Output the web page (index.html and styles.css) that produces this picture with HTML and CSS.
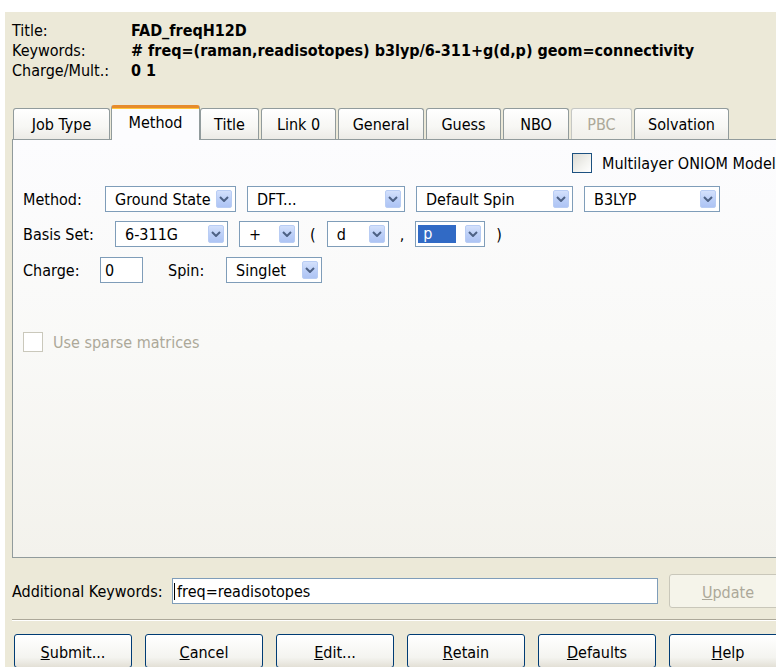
FILE: index.html
```html
<!DOCTYPE html>
<html lang="en">
<head>
<meta charset="utf-8">
<title>Gaussian Calculation Setup</title>
<link rel="stylesheet" href="styles.css">
</head>
<body>
<div class="dialog">
  <div class="summary">
    <span class="s-label">Title:</span><span class="s-value">FAD_freqH12D</span>
    <span class="s-label">Keywords:</span><span class="s-value"># freq=(raman,readisotopes) b3lyp/6-311+g(d,p) geom=connectivity</span>
    <span class="s-label">Charge/Mult.:</span><span class="s-value">0 1</span>
  </div>

  <div class="tabs">
    <div class="tab tab-job">Job Type</div>
    <div class="tab tab-method is-active">Method</div>
    <div class="tab tab-title">Title</div>
    <div class="tab tab-link">Link 0</div>
    <div class="tab tab-general">General</div>
    <div class="tab tab-guess">Guess</div>
    <div class="tab tab-nbo">NBO</div>
    <div class="tab tab-pbc is-disabled">PBC</div>
    <div class="tab tab-solv">Solvation</div>
  </div>

  <div class="panel">
    <div class="row row-oniom">
      <span class="check"></span>
      <span>Multilayer ONIOM Model</span>
    </div>

    <div class="row row-method">
      <span class="lbl lbl-method">Method:</span>
      <div class="combo w-ground"><span class="combo-text">Ground State</span><span class="drop"><svg viewBox="0 0 10 6" width="10" height="6"><polyline points="1,1 5,5 9,1" /></svg></span></div>
      <div class="combo w-dft"><span class="combo-text">DFT...</span><span class="drop"><svg viewBox="0 0 10 6" width="10" height="6"><polyline points="1,1 5,5 9,1" /></svg></span></div>
      <div class="combo w-spin"><span class="combo-text">Default Spin</span><span class="drop"><svg viewBox="0 0 10 6" width="10" height="6"><polyline points="1,1 5,5 9,1" /></svg></span></div>
      <div class="combo w-func"><span class="combo-text">B3LYP</span><span class="drop"><svg viewBox="0 0 10 6" width="10" height="6"><polyline points="1,1 5,5 9,1" /></svg></span></div>
    </div>

    <div class="row row-basis">
      <span class="lbl lbl-basis">Basis Set:</span>
      <div class="combo w-basis"><span class="combo-text">6-311G</span><span class="drop"><svg viewBox="0 0 10 6" width="10" height="6"><polyline points="1,1 5,5 9,1" /></svg></span></div>
      <div class="combo w-diffuse"><span class="combo-text">+</span><span class="drop"><svg viewBox="0 0 10 6" width="10" height="6"><polyline points="1,1 5,5 9,1" /></svg></span></div>
      <span class="punct">(</span>
      <div class="combo w-pol"><span class="combo-text">d</span><span class="drop"><svg viewBox="0 0 10 6" width="10" height="6"><polyline points="1,1 5,5 9,1" /></svg></span></div>
      <span class="punct">,</span>
      <div class="combo w-pol2"><span class="combo-sel">p</span><span class="drop"><svg viewBox="0 0 10 6" width="10" height="6"><polyline points="1,1 5,5 9,1" /></svg></span></div>
      <span class="punct">)</span>
    </div>

    <div class="row row-charge">
      <span class="lbl lbl-charge">Charge:</span>
      <div class="textbox w-charge">0</div>
      <span class="lbl lbl-spin">Spin:</span>
      <div class="combo w-mult"><span class="combo-text">Singlet</span><span class="drop"><svg viewBox="0 0 10 6" width="10" height="6"><polyline points="1,1 5,5 9,1" /></svg></span></div>
    </div>

    <div class="row row-sparse is-disabled">
      <span class="check check-disabled"></span>
      <span>Use sparse matrices</span>
    </div>
  </div>

  <div class="keywords-row">
    <span class="lbl lbl-keywords">Additional Keywords:</span>
    <div class="textbox w-keywords"><span class="caret"></span>freq=readisotopes</div>
    <div class="btn btn-disabled"><u>U</u>pdate</div>
  </div>

  <div class="separator"></div>

  <div class="buttons">
    <div class="btn"><u>S</u>ubmit...</div>
    <div class="btn"><u>C</u>ancel</div>
    <div class="btn"><u>E</u>dit...</div>
    <div class="btn"><u>R</u>etain</div>
    <div class="btn"><u>D</u>efaults</div>
    <div class="btn"><u>H</u>elp</div>
  </div>
</div>
</body>
</html>
```

FILE: styles.css
```css
html, body {
  margin: 0;
  padding: 0;
  background: #ffffff;
  overflow: hidden;
}

body {
  font-family: "DejaVu Sans Condensed", "DejaVu Sans", sans-serif;
  font-stretch: condensed;
  font-size: 16px;
  color: #000000;
}

.dialog {
  margin: 12px 0 0 5px;
  padding: 8px 0 0 7px;
  width: 800px;
  height: 700px;
  background: #ece9d8;
  box-sizing: border-box;
}

/* route summary at the top */
.summary {
  display: grid;
  grid-template-columns: 119px auto;
  grid-auto-rows: 20px;
  align-items: center;
}

.s-value {
  font-weight: bold;
}

/* tab strip */
.tabs {
  display: flex;
  align-items: flex-end;
  gap: 2px;
  height: 34px;
  margin: 25px 0 0 1px;
  position: relative;
  z-index: 1;
}

.tab {
  box-sizing: border-box;
  height: 31px;
  border: 1px solid #919b9c;
  border-bottom: none;
  border-radius: 3px 3px 0 0;
  background: linear-gradient(#ffffff, #f7f7f4 60%, #ecebe6);
  display: flex;
  align-items: center;
  justify-content: center;
  padding-top: 1px;
}

.tab.is-active {
  height: 35px;
  margin: 0 -2px -1px -1px;
  background: #fcfcfe;
  border-top: 3px solid #e68b2c;
  box-shadow: inset 0 1px 0 #ffc73c;
  padding-top: 0;
  padding-bottom: 4px;
}

.tab.is-disabled {
  color: #aca899;
  background: linear-gradient(#fbfbf9, #f1f0ea);
  border-color: #c5c7c4;
}

.tab-job { width: 97px; }
.tab-method { width: 89px; }
.tab-title { width: 59px; }
.tab-link { width: 75px; }
.tab-general { width: 86px; }
.tab-guess { width: 75px; }
.tab-nbo { width: 66px; }
.tab-pbc { width: 61px; }
.tab-solv { width: 95px; }

/* tab page */
.panel {
  box-sizing: border-box;
  width: 786px;
  height: 419px;
  border: 1px solid #919b9c;
  background: linear-gradient(#fcfcfe, #f9f9f7 50%, #f3f2ec);
  padding: 13px 0 0 10px;
}

.row {
  display: flex;
  align-items: center;
}

.row-oniom {
  height: 20px;
  padding-left: 549px;
  gap: 10px;
}

.row-method {
  height: 26px;
  margin-top: 13px;
  gap: 11px;
}

.row-basis {
  height: 26px;
  margin-top: 9px;
  gap: 11px;
}

.row-charge {
  height: 26px;
  margin-top: 10px;
}

.row-sparse {
  height: 20px;
  margin-top: 49px;
  gap: 10px;
}

.is-disabled {
  color: #aca899;
}

.lbl {
  flex: none;
  white-space: nowrap;
}

.row-method .lbl-method { width: 71px; }
.row-basis .lbl-basis { width: 81px; }
.lbl-charge { width: 77px; }
.lbl-spin { width: 58px; margin-left: 25px; }

/* checkboxes */
.check {
  box-sizing: border-box;
  width: 20px;
  height: 20px;
  border: 1px solid #1c5180;
  background: linear-gradient(135deg, #dcdbd5, #f3f3ef 60%, #ffffff);
  flex: none;
}

.check.check-disabled {
  border-color: #cac8bb;
  background: #ffffff;
}

/* combo boxes */
.combo {
  box-sizing: border-box;
  height: 26px;
  border: 1px solid #7f9db9;
  background: #ffffff;
  display: flex;
  align-items: center;
  flex: none;
  padding: 0 3px 0 0;
}

.combo-text {
  flex: 1;
  padding-left: 9px;
  white-space: nowrap;
  overflow: hidden;
}

.combo-sel {
  width: 38px;
  height: 18px;
  margin: 0 auto 0 2px;
  padding-left: 5px;
  box-sizing: border-box;
  background: #316ac5;
  color: #ffffff;
  line-height: 18px;
}

.drop {
  box-sizing: border-box;
  width: 16px;
  height: 18px;
  border: 1px solid #b9cdf4;
  border-radius: 2px;
  background: linear-gradient(#d4e1fc, #b9cdf7 60%, #aec4f4);
  display: flex;
  align-items: center;
  justify-content: center;
  flex: none;
}

.drop svg polyline {
  fill: none;
  stroke: #4d6185;
  stroke-width: 2;
}

.w-ground { width: 131px; }
.w-dft { width: 158px; }
.w-spin { width: 157px; }
.w-func { width: 136px; }
.w-basis { width: 113px; }
.w-diffuse { width: 60px; }
.w-pol { width: 62px; }
.w-pol2 { width: 70px; }
.w-mult { width: 96px; }

.punct {
  flex: none;
}

/* text inputs */
.textbox {
  box-sizing: border-box;
  height: 26px;
  border: 1px solid #7f9db9;
  background: #ffffff;
  display: flex;
  align-items: center;
  padding-left: 4px;
  flex: none;
  white-space: nowrap;
}

.w-charge { width: 43px; }
.w-keywords { width: 486px; padding-left: 0; }

.caret {
  width: 1px;
  height: 17px;
  background: #000000;
  margin: 0 2px 0 1px;
}

/* additional keywords line */
.keywords-row {
  display: flex;
  align-items: center;
  height: 34px;
  margin-top: 16px;
}

.lbl-keywords { width: 160px; }

.keywords-row .btn {
  margin-left: 11px;
}

.separator {
  height: 0;
  width: 790px;
  border-top: 1px solid #aca899;
  border-bottom: 1px solid #ffffff;
  margin-top: 11px;
}

/* command buttons */
.buttons {
  display: flex;
  gap: 13px;
  margin-top: 13px;
  padding-left: 2px;
}

.btn {
  box-sizing: border-box;
  width: 118px;
  height: 34px;
  border: 1px solid #003c74;
  border-radius: 3px;
  background: linear-gradient(#ffffff, #f4f4f0 70%, #e3e0d6);
  display: flex;
  align-items: center;
  justify-content: center;
  flex: none;
  padding-top: 2px;
}

.btn.btn-disabled {
  border-color: #c9c7ba;
  background: #f5f4ea;
  color: #aca899;
}
```
